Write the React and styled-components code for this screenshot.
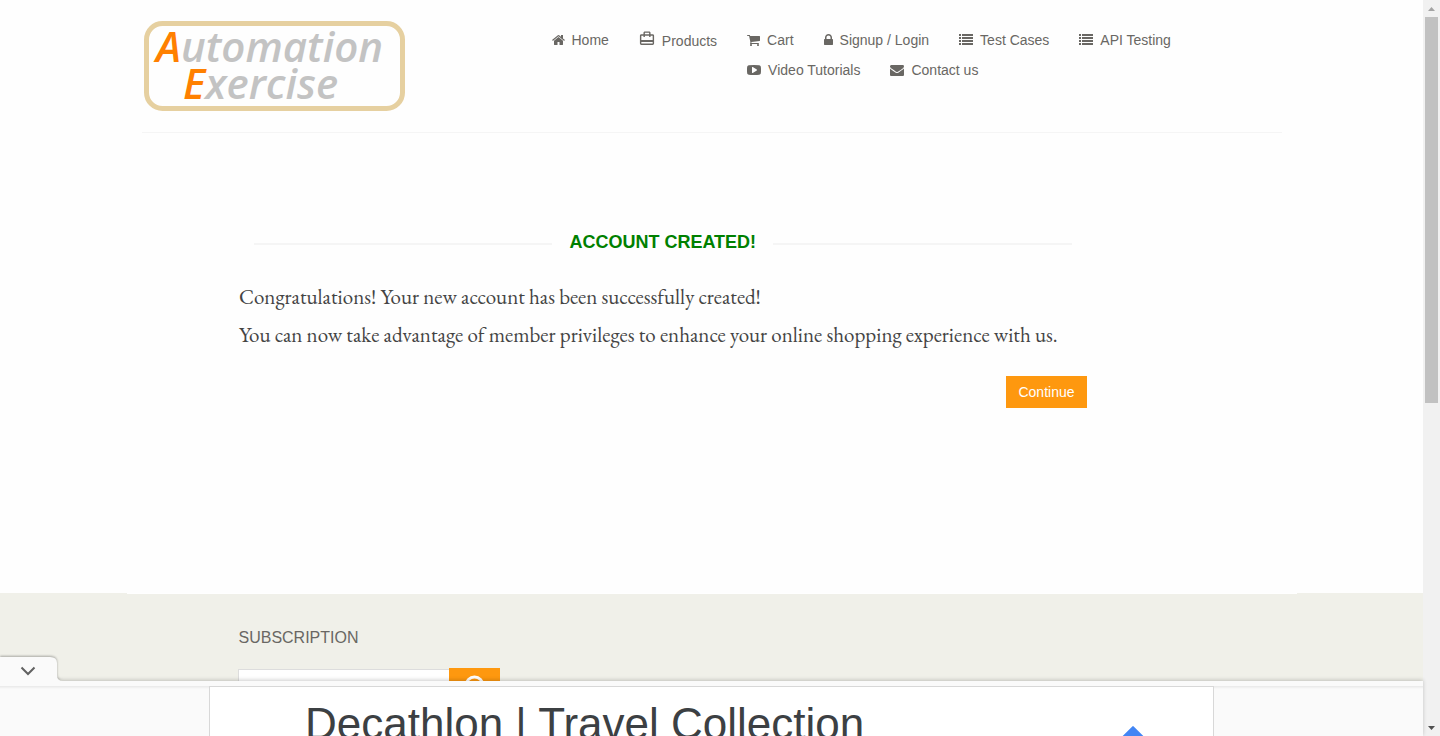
import React from "react";
import styled, { createGlobalStyle, css } from "styled-components";

const sans = '"Liberation Sans", Arial, sans-serif';
const orange = "#fe980f";
const ink = "#696763";

const GlobalStyle = createGlobalStyle`
  * { box-sizing: border-box; }
  body {
    margin: 0;
    background: #fefefe;
    font: 14px/20px ${sans};
    color: ${ink};
  }
`;

const Shell = styled.div`
  display: flex;
  height: 100vh;
  overflow: hidden;
`;

const Page = styled.div`
  flex: 1;
  min-width: 0;
  overflow: hidden;
`;

const Container = styled.div`
  width: 100%;
  max-width: 1170px;
  margin: 0 auto;
  padding: 0 15px;
`;

const HeaderRow = styled.div`
  display: flex;
  align-items: flex-start;
  padding-top: 21px;
  padding-bottom: 21px;
  border-bottom: 1px solid #f5f5f5;
`;

const LogoLink = styled.a`
  display: block;
  flex: none;
  margin-left: 2px;
  svg { display: block; }
`;

const Nav = styled.nav`
  flex: 1;
  display: flex;
  gap: 30px;
  margin-left: 147px;
  padding-top: 4px;
`;

const NavList = styled.ul`
  display: flex;
  flex-wrap: wrap;
  align-content: flex-start;
  column-gap: 30px;
  margin: 0;
  padding: 0;
  list-style: none;
  ${(p) => p.$grow && css`flex: 1;`}
`;

const NavLink = styled.a`
  display: flex;
  align-items: center;
  gap: 7px;
  height: 30px;
  color: ${ink};
  text-decoration: none;
  white-space: nowrap;
  ${(p) => p.$tall && css`
    height: 32px;
    svg { margin-bottom: 6px; }
  `}
`;

const Message = styled.section`
  width: 75%;
  min-height: 460px;
  margin-left: calc(100% / 12);
  padding: 99px 15px 0;
`;

const Title = styled.h2`
  display: flex;
  align-items: center;
  gap: 17px;
  margin: 0 15px 31px;
  color: green;
  font-size: 18px;
  line-height: 20px;
  text-transform: uppercase;
  &::before, &::after {
    content: "";
    flex: 1;
    height: 2px;
    margin-top: 4px;
    background: #f5f5f5;
  }
`;

const Copy = styled.p`
  margin: 0 0 10px;
  color: #444;
  font: 21px/28px Garamond, "EB Garamond", "Liberation Serif", serif;
`;

const Actions = styled.div`
  display: flex;
  justify-content: flex-end;
  padding-top: 17px;
`;

const ContinueLink = styled.a`
  padding: 6px 12px;
  background: ${orange};
  color: #fff;
  text-decoration: none;
`;

const Row = styled.div`
  width: 100%;
  max-width: 1170px;
  margin: 0 auto;
`;

const Footer = styled.footer`
  background: #f0f0e9;
`;

const FooterInner = styled(Row)`
  border-top: 1px solid #fff;
  padding: 34px 15px 60px;
`;

const Subscribe = styled.form`
  width: 262px;
  margin-left: calc(100% / 12 + 2px);
`;

const SubscribeTitle = styled.h2`
  margin: 0 0 20px;
  font-size: 16px;
  font-weight: 400;
  line-height: 20px;
  text-transform: uppercase;
`;

const SubscribeRow = styled.div`
  display: flex;
  align-items: flex-start;
  input {
    flex: 1;
    min-width: 0;
    height: 33px;
    margin-top: 1px;
    border: 1px solid #ddd;
    border-right: 0;
    background: #fff;
  }
  button {
    width: 51px;
    height: 34px;
    padding: 6px 14px;
    border: 0;
    background: ${orange};
  }
  svg { display: block; }
`;

const AdBar = styled.aside`
  position: fixed;
  left: 0;
  right: 17px;
  bottom: 0;
  height: 55px;
  padding-top: 5px;
  background: #fafafa;
  box-shadow: 0 -1px 4px rgba(0, 0, 0, 0.2);
`;

const AdTab = styled.button`
  position: absolute;
  left: 0;
  bottom: 100%;
  padding: 0;
  border: 0;
  background: none;
  svg { display: block; }
`;

const AdTrack = styled.div`
  height: 50px;
  overflow: hidden;
  background: linear-gradient(#e8e8e8, #fafafa 3px);
`;

const AdCard = styled.a`
  display: flex;
  justify-content: space-between;
  width: 100%;
  max-width: 1005px;
  height: 90px;
  margin: 0 auto;
  padding: 12px 68px 0 95px;
  border: 1px solid #d8d8d8;
  background: #fff;
  color: #3c4043;
  font-size: 44px;
  line-height: 50px;
  text-decoration: none;
  svg { margin-top: 26px; }
`;

const Scrollbar = styled.div`
  flex: none;
  display: flex;
  flex-direction: column;
  align-items: center;
  width: 17px;
  background: #f1f1f1;
  svg { display: block; flex: none; }
`;

const Track = styled.div`
  flex: 1;
  width: 13px;
`;

const Thumb = styled.div`
  height: 55%;
  background: #c1c1c1;
`;

const glyphs = {
  home: [1664, "M1472 992v480q0 26-19 45t-45 19h-384v-384h-256v384h-384q-26 0-45-19t-19-45v-480q0-1 .5-3t.5-3l575-474 575 474q1 2 1 6zm223-69l-62 74q-8 9-21 11h-3q-13 0-21-7l-692-577-692 577q-12 8-24 7-13-2-21-11l-62-74q-8-10-7-23.5t11-21.5l719-599q32-26 76-26t76 26l244 204v-195q0-14 9-23t23-9h192q14 0 23 9t9 23v408l219 182q10 8 11 21.5t-7 23.5z"],
  cart: [1664, "M704 1536q0 52-38 90t-90 38-90-38-38-90 38-90 90-38 90 38 38 90zm896 0q0 52-38 90t-90 38-90-38-38-90 38-90 90-38 90 38 38 90zm128-1088v512q0 24-16.500 42.500t-40.500 21.500l-1044 122q13 60 13 70 0 16-24 64h920q26 0 45 19t19 45-19 45-45 19h-1024q-26 0-45-19t-19-45q0-11 8-31.500t16-36 21.500-40 15.500-29.500l-177-823h-204q-26 0-45-19t-19-45 19-45 45-19h256q16 0 28.500 6.500t19.500 15.500 13 24.500 8 26 5.500 29.500 4.500 26h1201q26 0 45 19t19 45z"],
  lock: [1152, "M640 768h512v-192q0-106-75-181t-181-75-181 75-75 181v192zm832 96v576q0 40-28 68t-68 28h-960q-40 0-68-28t-28-68v-576q0-40 28-68t68-28h32v-192q0-184 132-316t316-132 316 132 132 316v192h32q40 0 68 28t28 68z"],
  list: [1792, "M0 128h256v256H0zM384 128h1408v256H384zM0 512h256v256H0zM384 512h1408v256H384zM0 896h256v256H0zM384 896h1408v256H384zM0 1280h256v256H0zM384 1280h1408v256H384z"],
  video: [1792, "M1280 896q0-37-30-54l-512-320q-31-20-65-2-33 18-33 56v640q0 38 33 56 16 8 31 8 20 0 34-10l512-320q30-17 30-54zm512 0q0 96-1 150t-8.500 136.500-22.500 147.500q-16 73-69 123t-124 58q-222 25-671 25t-671-25q-71-8-124.500-58t-69.500-123q-14-65-21.500-147.500t-8.500-136.500-1-150 1-150 8.500-136.500 22.500-147.500q16-73 69-123t124-58q222-25 671-25t671 25q71 8 124.500 58t69.500 123q14 65 21.500 147.500t8.500 136.500 1 150z"],
  mail: [1792, "M1792 710v794q0 66-47 113t-113 47h-1472q-66 0-113-47t-47-113v-794q44 49 101 87 362 246 497 345 57 42 92.500 65.500t94.500 48 110 24.500h2q51 0 110-24.500t94.500-48 92.500-65.500q170-123 498-345 57-39 100-87zm0-294q0 79-49 151t-122 123q-376 261-468 325-10 7-42.500 31t-54 38.500-52 32.500-57.500 27-50 9h-2q-23 0-50-9t-57.500-27-52-32.500-54-38.500-42.500-31q-91-64-262-182.500t-205-142.500q-62-42-117-115.500t-55-136.500q0-78 41.500-130t118.500-52h1472q65 0 112.500 47t47.500 113z"],
};

function Glyph({ name }) {
  const [w, d] = glyphs[name];
  return (
    <svg width={w / 128} height="14" viewBox={`${(1792 - w) / 2} 0 ${w} 1792`} fill="currentColor" aria-hidden="true">
      <path d={d} />
    </svg>
  );
}

function CaseIcon() {
  return (
    <svg width="16" height="17" viewBox="1 0 22 24" fill="currentColor" aria-hidden="true">
      <path d="M20 6h-3V4c0-1.110-.89-2-2-2H9c-1.110 0-2 .89-2 2v2H4c-1.110 0-2 .89-2 2v11c0 1.110.89 2 2 2h16c1.110 0 2-.89 2-2V8c0-1.110-.89-2-2-2zM9 4h6v2H9V4zm11 15H4v-2h16v2zm0-5H4V8h3v2h2V8h6v2h2V8h3v6z" />
    </svg>
  );
}

const links = [
  ["cart", "Cart"],
  ["lock", "Signup / Login"],
  ["list", "Test Cases"],
  ["list", "API Testing"],
  ["video", "Video Tutorials"],
  ["mail", "Contact us"],
];

function Logo() {
  return (
    <svg width="261" height="90" viewBox="0 0 261 90" role="img" aria-label="Automation Exercise">
      <rect x="2.500" y="2.500" width="256" height="85" rx="16" fill="#fefefe" stroke="#e6d0a0" strokeWidth="5" />
      <g fontFamily="'Open Sans', sans-serif" fontStyle="italic" fontWeight="600" fontSize="42" fill="#c3c3c3">
        <text x="12" y="41"><tspan fill="#ff8000">A</tspan>utomation</text>
        <text x="39" y="78"><tspan fill="#ff8000">E</tspan>xercise</text>
      </g>
    </svg>
  );
}

export default function App() {
  return (
    <Shell>
      <GlobalStyle />
      <Page>
        <Container as="header">
          <HeaderRow>
            <LogoLink href="#home"><Logo /></LogoLink>
            <Nav>
              <NavList>
                <li><NavLink href="#home"><Glyph name="home" />Home</NavLink></li>
                <li><NavLink href="#products" $tall><CaseIcon />Products</NavLink></li>
              </NavList>
              <NavList $grow>
                {links.map(([icon, label]) => (
                  <li key={label}><NavLink href="#nav"><Glyph name={icon} />{label}</NavLink></li>
                ))}
              </NavList>
            </Nav>
          </HeaderRow>
        </Container>
        <Row as="main">
          <Message>
            <Title>Account Created!</Title>
            <Copy>Congratulations! Your new account has been successfully created!</Copy>
            <Copy>You can now take advantage of member privileges to enhance your online shopping experience with us.</Copy>
            <Actions><ContinueLink href="#continue">Continue</ContinueLink></Actions>
          </Message>
        </Row>
        <Footer>
          <FooterInner>
            <Subscribe>
              <SubscribeTitle>Subscription</SubscribeTitle>
              <SubscribeRow>
                <input type="email" aria-label="Your email address" />
                <button type="button" aria-label="Subscribe">
                  <svg width="23" height="23" viewBox="0 0 23 23" fill="none" stroke="#fff" strokeWidth="3">
                    <circle cx="11.500" cy="11.500" r="8.500" />
                    <path d="M7 11.500h8M11.500 8l3.500 3.500-3.500 3.500" strokeWidth="2" />
                  </svg>
                </button>
              </SubscribeRow>
            </Subscribe>
          </FooterInner>
        </Footer>
      </Page>
      <Scrollbar aria-hidden="true">
        <svg width="17" height="17"><path d="M5 11h7L8.500 7z" fill="#a3a3a3" /></svg>
        <Track><Thumb /></Track>
        <svg width="17" height="17"><path d="M5 7h7l-3.500 4z" fill="#505050" /></svg>
      </Scrollbar>
      <AdBar>
        <AdTab type="button" aria-label="Hide advertisement">
          <svg width="66" height="27" viewBox="0 0 66 27">
            <path d="M0 3h50q7 0 7 6v12q0 6 6 6H0z" fill="#fafafa" style={{ filter: "drop-shadow(0 -1px 1px rgba(0,0,0,.3))" }} />
            <path d="M21.500 13.500l6.500 6.500 6.500-6.500" fill="none" stroke="#616161" strokeWidth="2" />
          </svg>
        </AdTab>
        <AdTrack>
          <AdCard href="#ad">
            Decathlon | Travel Collection
            <svg width="24" height="24" viewBox="0 0 24 24" aria-hidden="true">
              <rect x="4" y="4" width="16" height="16" rx="1" fill="#4285f4" transform="rotate(45 12 12)" />
            </svg>
          </AdCard>
        </AdTrack>
      </AdBar>
    </Shell>
  );
}
